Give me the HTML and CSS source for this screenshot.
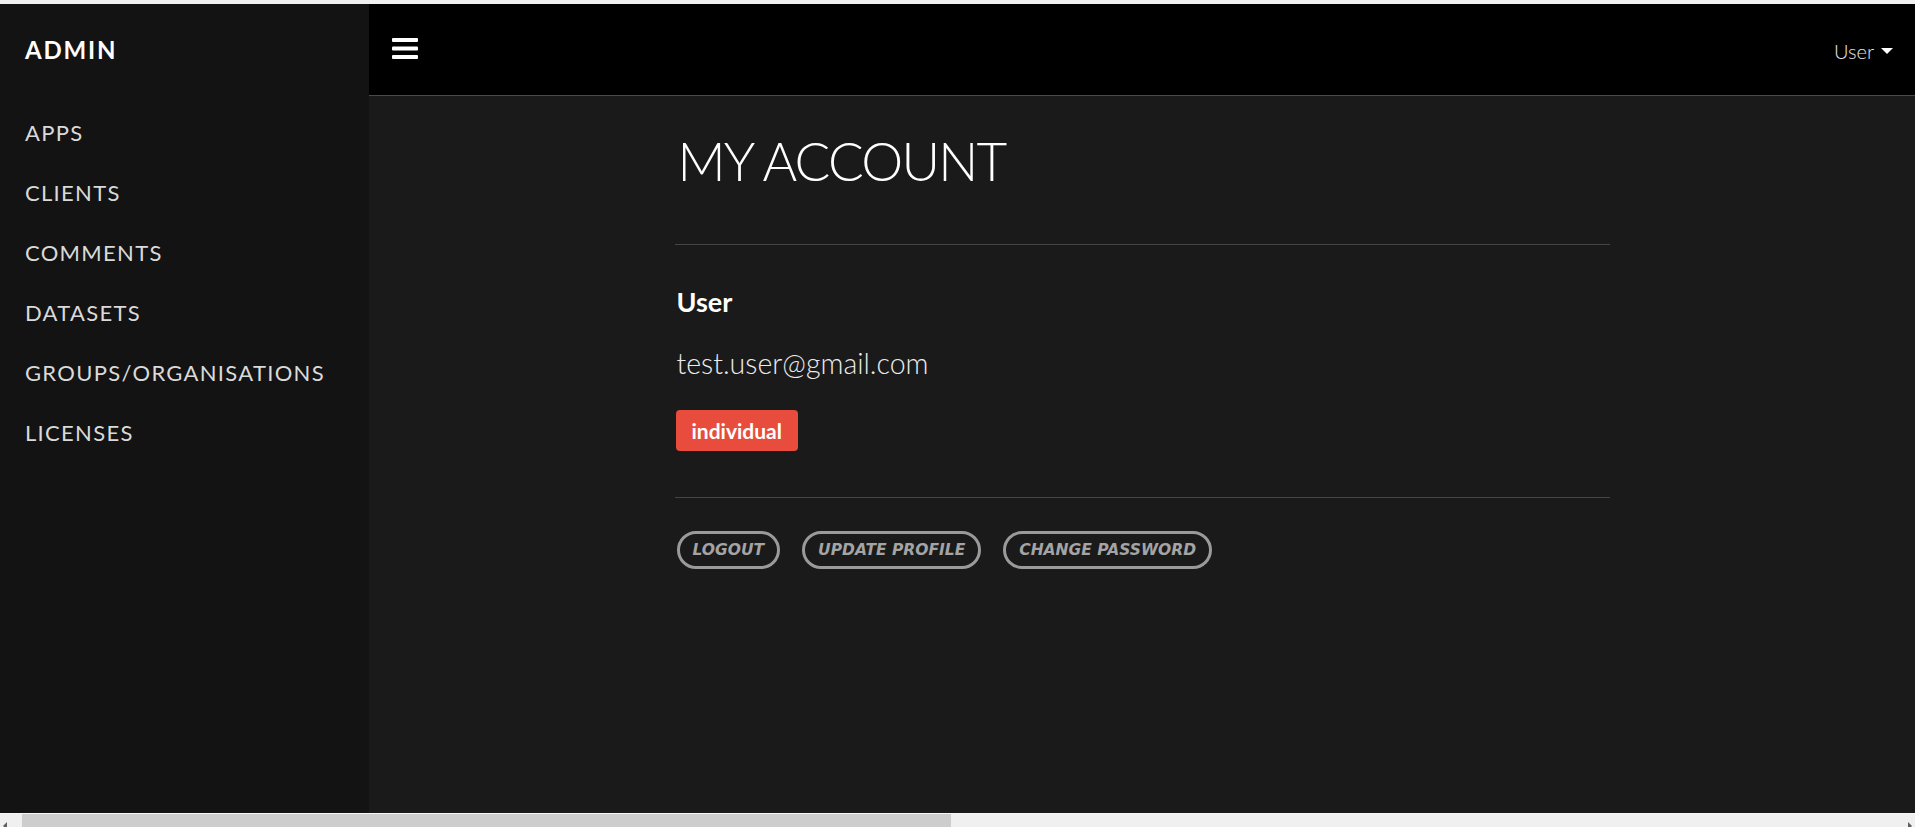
FILE: index.html
```html
<!DOCTYPE html>
<html lang="en">
<head>
<meta charset="utf-8">
<title>My Account</title>
<link rel="stylesheet" href="styles.css">
</head>
<body>
<div class="frame">
  <div class="topstrip"></div>
  <div class="app">
    <aside class="sidebar">
      <div class="brand">ADMIN</div>
      <nav class="nav">
        <a class="nav-item" href="#">APPS</a>
        <a class="nav-item" href="#">CLIENTS</a>
        <a class="nav-item" href="#">COMMENTS</a>
        <a class="nav-item" href="#">DATASETS</a>
        <a class="nav-item" href="#">GROUPS/ORGANISATIONS</a>
        <a class="nav-item" href="#">LICENSES</a>
      </nav>
    </aside>
    <main class="main">
      <header class="topbar">
        <button class="menu-btn" aria-label="Toggle menu">
          <svg width="26" height="21" viewBox="0 0 26 21"><rect x="0" y="0" width="26" height="4" rx="1" fill="#fff"/><rect x="0" y="8.5" width="26" height="4" rx="1" fill="#fff"/><rect x="0" y="17" width="26" height="4" rx="1" fill="#fff"/></svg>
        </button>
        <div class="user-menu">User <span class="caret"></span></div>
      </header>
      <section class="content">
        <h1 class="title">MY ACCOUNT</h1>
        <hr class="rule rule-top">
        <h2 class="name">User</h2>
        <p class="email">test.user@gmail.com</p>
        <span class="badge">individual</span>
        <hr class="rule rule-bottom">
        <div class="actions">
          <a class="pill" href="#">LOGOUT</a>
          <a class="pill" href="#">UPDATE PROFILE</a>
          <a class="pill" href="#">CHANGE PASSWORD</a>
        </div>
      </section>
    </main>
  </div>
  <div class="hscroll">
    <span class="arrow arrow-left"></span>
    <div class="track"><div class="thumb"></div></div>
    <span class="arrow arrow-right"></span>
  </div>
</div>
</body>
</html>
```
FILE: styles.css
```css
* { box-sizing: border-box; }
html, body { margin: 0; padding: 0; height: 100%; overflow: hidden; }
body { font-family: Lato, "Noto Sans", sans-serif; background: #1a1a1a; color: #e6e6e6; }

.frame { display: flex; flex-direction: column; height: 100vh; }
.topstrip { height: 4px; background: #f1f1f1; flex: none; }
.app { flex: 1; display: flex; min-height: 0; }

.sidebar { width: 369px; flex: none; background: #131313; padding: 31px 0 0 25px; }
.brand { font-size: 24px; line-height: 30px; font-weight: 700; letter-spacing: 1.8px; color: #fff; }
.nav { display: flex; flex-direction: column; margin-top: 38px; }
.nav-item { font-size: 22px; line-height: 60px; font-weight: 400; letter-spacing: 1.3px; color: #dadada; text-decoration: none; }

.main { flex: 1; display: flex; flex-direction: column; background: #1a1a1a; }
.topbar { height: 92px; flex: none; background: #000; border-bottom: 1px solid #4a4a4a; display: flex; align-items: center; justify-content: space-between; padding: 0 22px 0 23px; }
.menu-btn { background: none; border: 0; padding: 0; display: flex; margin-top: -3px; cursor: pointer; }
.user-menu { font-size: 20px; font-weight: 300; color: #e8e8e8; display: flex; align-items: center; gap: 7px; margin-top: 2px; }
.caret { width: 0; height: 0; border-left: 6.5px solid transparent; border-right: 6.5px solid transparent; border-top: 6px solid #fff; }

.content { width: 935px; margin: 0 auto; padding-top: 32px; }
.title { margin: 0; font-size: 53px; line-height: 65px; font-weight: 300; color: #fff; padding-left: 3px; letter-spacing: -1.8px; }
.rule { border: 0; height: 1px; background: #454545; margin: 0; }
.rule-top { margin-top: 51px; }
.name { margin: 41px 0 0; font-size: 27px; line-height: 32px; font-weight: 700; color: #fff; padding-left: 2px; }
.email { margin: 29px 0 0; font-size: 28.5px; line-height: 33px; font-weight: 300; color: #ececec; padding-left: 2px; }
.badge { display: inline-block; margin: 30px 0 0 1px; background: #e74c3c; color: #fff; font-weight: 700; font-size: 21px; line-height: 41px; height: 41px; padding: 0 16px; border-radius: 4px; }
.rule-bottom { margin-top: 46px; }
.actions { display: flex; gap: 22px; margin-top: 33px; padding-left: 2px; }
.pill { display: flex; align-items: center; height: 38px; padding: 0 13px; border: 3px solid #9a9a9a; border-radius: 19px; color: #a4a4a4; text-decoration: none; font-family: "DejaVu Sans", sans-serif; font-style: italic; font-weight: 700; font-size: 15.5px; letter-spacing: 0; }

.hscroll { height: 14px; flex: none; background: #f0f0f0; display: flex; align-items: flex-start; border-top: 1px solid #f7f7f7; }
.track { flex: 1; height: 13px; }
.thumb { margin-left: 8px; width: 929px; height: 13px; background: #cdcdcd; }
.arrow { width: 14px; flex: none; height: 13px; position: relative; }
.arrow-left::after, .arrow-right::after { content: ""; position: absolute; top: 8px; width: 0; height: 0; border-top: 4px solid transparent; border-bottom: 4px solid transparent; }
.arrow-left::after { left: 3px; border-right: 4px solid #606060; }
.arrow-right::after { right: 3px; border-left: 4px solid #606060; }
```
